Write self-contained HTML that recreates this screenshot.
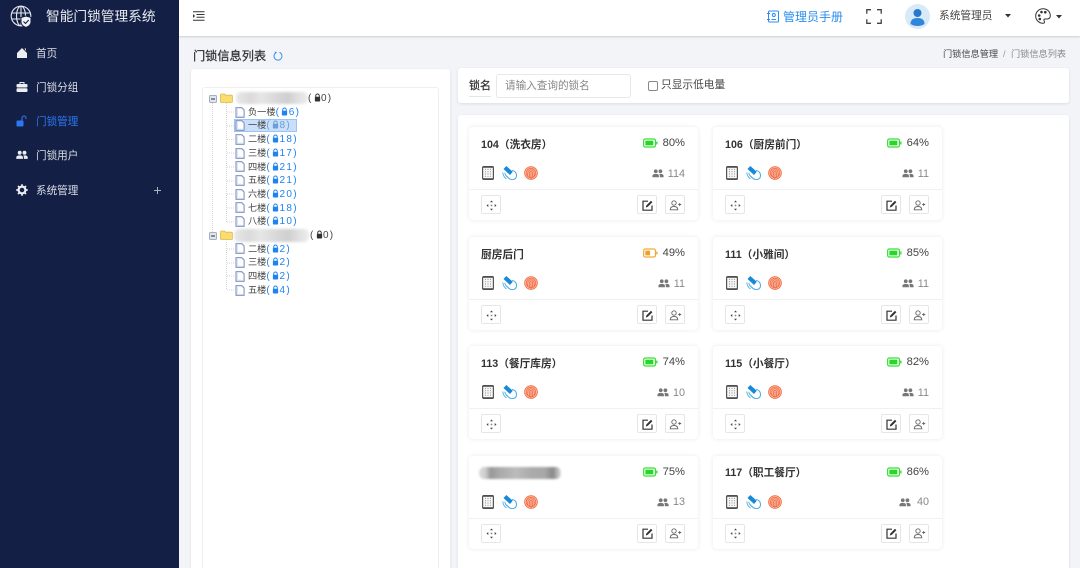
<!DOCTYPE html>
<html lang="zh"><head><meta charset="utf-8"><title>门锁信息列表</title>
<style>
*{box-sizing:border-box}
html,body{margin:0;padding:0;width:1080px;height:568px;overflow:hidden}
body{position:relative;background:#f3f4f8;font-family:"Liberation Sans","Noto Sans CJK SC",sans-serif;color:#333}
.a{position:absolute;white-space:nowrap}
#side{left:0;top:0;width:179px;height:568px;background:#131f45}
#head{left:179px;top:0;width:901px;height:36px;background:#fff;box-shadow:0 1px 2px rgba(0,0,0,.16)}
.m{left:36px;font-size:10.6px;line-height:14px;color:#dcdfe6}
.panel{background:#fff;border-radius:3px;box-shadow:0 1px 3px rgba(0,0,0,.09)}
.card{position:absolute;width:229px;height:93px;background:#fff;border-radius:4px;box-shadow:0 0 4px rgba(30,40,90,.10)}
.card .t{position:absolute;left:12px;top:9.5px;font-size:10.7px;line-height:16px;font-weight:700;color:#333;white-space:nowrap}
.card .p{position:absolute;right:13px;top:8px;font-size:11.2px;line-height:16px;color:#444}
.card .bat{position:absolute;right:40px;top:11px}
.card .i1{position:absolute;left:13px;top:39px}
.card .i2{position:absolute;left:33px;top:39px}
.card .i3{position:absolute;left:55px;top:39px}
.card .u{position:absolute;right:13px;top:39.5px;font-size:10.8px;line-height:15px;color:#888}
.card .ug{position:absolute;top:42px}
.card hr{position:absolute;left:0;right:0;top:62px;margin:0;border:0;border-top:1px solid #f1f1f4}
.b{position:absolute;top:68px;width:20px;height:19px;border:1px solid #e6e6ea;border-radius:2px;background:#fff}
.b svg{position:absolute;left:3px;top:2.5px}
.b1{left:12px}.b2{left:168px}.b3{left:196px}
.r{position:absolute;font-size:9.2px;line-height:13px;color:#444;white-space:nowrap}
.r b{font-weight:400;color:#1e82f0;font-size:10px;letter-spacing:1.3px}
.r svg{vertical-align:-1px;margin:0 .5px 0 1px}
.r.z{font-size:10px;letter-spacing:1.2px}
.blur{position:absolute;background:linear-gradient(90deg,#e8e8e8 0,#dadada 20%,#e6e6e6 35%,#d6d6d6 60%,#cfcfcf 72%,#e2e2e2 88%,#ececec 100%);filter:blur(1.2px);border-radius:5px}
</style></head><body>
<svg width="0" height="0" style="position:absolute">
<symbol id="lk" viewBox="0 0 8 10"><path d="M2 4.5V3a2 2 0 0 1 4 0v1.500" fill="none" stroke="currentColor" stroke-width="1.100"/><rect x="1" y="4.200" width="6" height="5.300" rx=".8" fill="currentColor"/></symbol>
<symbol id="doc" viewBox="0 0 10 11"><path d="M1 .7h5.800l2.300 2.300v7.300H1z" fill="#fff" stroke="#8492bd" stroke-width="1.100"/><path d="M2.300 2v7.300h5.500" fill="none" stroke="#cfe0f8"/></symbol>
<symbol id="fld" viewBox="0 0 13 10"><path d="M.5 2.200Q.5 1 1.600 1h3l1 1.200h5.800q1 0 1 1v5.600q0 .7-1 .7H1.500q-1 0-1-.7z" fill="#fbdc6e" stroke="#dcb84e" stroke-width=".8"/></symbol>
<symbol id="minus" viewBox="0 0 8 8"><rect x=".5" y=".5" width="7" height="7" rx="1" fill="#e1e5ed" stroke="#a5aec2"/><path d="M2 4h4" stroke="#333"/></symbol>
<symbol id="kp" viewBox="0 0 12 14"><rect x=".6" y=".6" width="10.800" height="12.800" rx="1" fill="#f8f8f8" stroke="#555" stroke-width="1.200"/><path d="M1 1.200h10M1 12.800h10" stroke="#444" stroke-width="1.200"/><g fill="#999"><circle cx="3.500" cy="3.400" r=".6"/><circle cx="6" cy="3.400" r=".6"/><circle cx="8.500" cy="3.400" r=".6"/><circle cx="3.500" cy="5.700" r=".6"/><circle cx="6" cy="5.700" r=".6"/><circle cx="8.500" cy="5.700" r=".6"/><circle cx="3.500" cy="8" r=".6"/><circle cx="6" cy="8" r=".6"/><circle cx="8.500" cy="8" r=".6"/><circle cx="3.500" cy="10.300" r=".6"/><circle cx="6" cy="10.300" r=".6"/><circle cx="8.500" cy="10.300" r=".6"/></g></symbol>
<symbol id="card" viewBox="0 0 15 14"><path d="M1.500 3 4.300 0 10.800 5.800 8 9z" fill="#1789d8"/><path d="M10 4.300q4.300 1 4.500 4.900.1 4-3.800 4.400Q8 14 4.500 10" fill="none" stroke="#46a9e6" stroke-width="1"/><path d="M.8 6.500q.3 4 3.700 6.500M2.800 6.800q.3 2.500 2.500 4" fill="none" stroke="#46a9e6" stroke-width=".9"/></symbol>
<symbol id="fp" viewBox="0 0 14 14"><circle cx="7" cy="7" r="6.900" fill="#fbbba6"/><g fill="none" stroke="#f0683f" stroke-width=".75"><circle cx="7" cy="7" r="6.300"/><circle cx="7" cy="7" r="4.700"/><path d="M3.800 10V7a3.200 3.200 0 0 1 6.400 0v3.500M5.500 12V7a1.500 1.500 0 0 1 3 0v5M7 6.500V13"/></g></symbol>
<symbol id="us" viewBox="0 0 13 10"><g fill="#777"><circle cx="4" cy="2.500" r="2.100"/><circle cx="9.200" cy="2.500" r="2.100"/><path d="M.3 9.200V7.500Q.5 5.400 4 5.400t3.500 2.100v1.700zM8.500 9.200V7q0-1-.8-1.500 1-.2 1.800-.1 3 .1 3.200 2.100v1.700z"/></g></symbol>
<symbol id="mv" viewBox="0 0 13 13"><g fill="#444"><path d="M6.500 1.500 8 3.300H5zM6.500 11.500 8 9.700H5zM1.500 6.500 3.300 5v3zM11.500 6.500 9.700 5v3z"/><circle cx="6.500" cy="6.500" r=".9" fill="#888"/></g></symbol>
<symbol id="ed" viewBox="0 0 13 13"><path d="M7 2.200H2v9h9V6.500" fill="none" stroke="#333" stroke-width="1.200"/><path d="M4.800 8.500 5.300 6.500 10 1.800l1.400 1.400-4.700 4.700z" fill="#333"/></symbol>
<symbol id="ua" viewBox="0 0 13 13"><g fill="none" stroke="#666" stroke-width=".9"><circle cx="5" cy="4" r="2.200"/><path d="M1.200 10.800q0-3.300 3.800-3.300t3.800 3.300z"/><path d="M9.200 5.500h3M10.700 4v3"/></g></symbol>
<symbol id="bg" viewBox="0 0 16 10"><rect x=".7" y=".7" width="12.600" height="8.600" rx="1.800" fill="#fff" stroke="#35e035" stroke-width="1.300"/><rect x="2.500" y="2.500" width="8.500" height="5" fill="#27d627"/><rect x="14" y="3.500" width="1.500" height="3" fill="#35e035"/></symbol>
<symbol id="bo" viewBox="0 0 16 10"><rect x=".7" y=".7" width="12.600" height="8.600" rx="1.800" fill="#fff" stroke="#f3a93a" stroke-width="1.300"/><rect x="2.500" y="2.500" width="5" height="5" fill="#f0a020"/><rect x="14" y="3.500" width="1.500" height="3" fill="#f3a93a"/></symbol>
</svg>

<div class="a" id="side"></div>
<svg class="a" style="left:10px;top:5px" width="24" height="24" viewBox="0 0 24 24"><g fill="none" stroke="#e6e8ee" stroke-width="1.100"><circle cx="11" cy="11" r="9.800"/><ellipse cx="11" cy="11" rx="4.500" ry="9.800"/><path d="M11 1v20M1.500 8h19M1.500 14h19"/></g><path d="M16 11l5 1.500V17q0 3.500-5 5.500-5-2-5-5.500v-4.500z" fill="#f1f3f7" stroke="#131f45"/><path d="M13.500 16.500l2 2 3.200-3.500" fill="none" stroke="#131f45" stroke-width="1.100"/></svg>
<div class="a" style="left:46px;top:7px;font-size:13.7px;line-height:20px;color:#e8eaef">智能门锁管理系统</div>

<svg class="a" style="left:16px;top:47px" width="12" height="12" viewBox="0 0 12 12"><path d="M6 1 11 6v5H1V6zM8.500 1.500H10v2.500z" fill="#eceef2"/></svg>
<div class="a m" style="top:46.500px">首页</div>
<svg class="a" style="left:16px;top:81px" width="12" height="12" viewBox="0 0 12 12"><path d="M4 3V1.500h4V3" fill="none" stroke="#eceef2"/><rect x=".5" y="3" width="11" height="3.500" rx="1" fill="#eceef2"/><rect x=".5" y="7.300" width="11" height="3.700" rx="1" fill="#eceef2"/></svg>
<div class="a m" style="top:80.500px">门锁分组</div>
<svg class="a" style="left:16px;top:115px" width="11" height="12" viewBox="0 0 11 12"><rect x=".5" y="5.500" width="7" height="6" rx="1" fill="#2d78f0"/><path d="M6 5.500V3a2 2 0 0 1 4 0v1" fill="none" stroke="#2d78f0" stroke-width="1.100"/></svg>
<div class="a m" style="top:114.500px;color:#2d78f0">门锁管理</div>
<svg class="a" style="left:16px;top:150px" width="12" height="10" viewBox="0 0 13 10"><g fill="#eceef2"><circle cx="4" cy="2.500" r="2.100"/><circle cx="9.200" cy="2.500" r="2.100"/><path d="M.3 9.200V7.500Q.5 5.400 4 5.400t3.500 2.100v1.700zM8.500 9.200V7q0-1-.8-1.500 1-.2 1.800-.1 3 .1 3.200 2.100v1.700z"/></g></svg>
<div class="a m" style="top:148.500px">门锁用户</div>
<svg class="a" style="left:16px;top:184px" width="12" height="12" viewBox="0 0 12 12"><circle cx="6" cy="6" r="3.400" fill="none" stroke="#eceef2" stroke-width="2.200"/><path d="M6 .3v2M6 9.700v2M.3 6h2M9.700 6h2M2 2l1.400 1.400M8.600 8.600 10 10M2 10l1.400-1.400M8.600 3.400 10 2" stroke="#eceef2" stroke-width="1.700"/></svg>
<div class="a m" style="top:183.500px">系统管理</div>
<svg class="a" style="left:154px;top:187px" width="7" height="7"><path d="M3.500 0v7M0 3.500h7" stroke="#aeb3c0"/></svg>

<div class="a" id="head"></div>
<svg class="a" style="left:193px;top:11px" width="12" height="10" viewBox="0 0 12 10"><path d="M0 .7h11.500M3.500 3.500h8M3.500 6.300h8M0 9.200h11.500" stroke="#333" stroke-width="1"/><path d="M0 3l2 2-2 2z" fill="#333"/></svg>
<svg class="a" style="left:767px;top:10px" width="12" height="13" viewBox="0 0 12 13"><g fill="none" stroke="#2b8df0"><rect x="1.500" y="1" width="10" height="11" rx="1"/><path d="M0 3.500h3M0 9.500h3M4.500 9.500h4.500"/><circle cx="6.800" cy="5" r="1.500"/></g></svg>
<div class="a" style="left:783px;top:9px;font-size:12px;line-height:17px;color:#2b8df0">管理员手册</div>
<svg class="a" style="left:866px;top:9px" width="16" height="15" viewBox="0 0 16 15"><path d="M5 .7H.8v4M11 .7h4.200v4M5 14.300H.8v-4M11 14.300h4.200v-4" fill="none" stroke="#444" stroke-width="1.300"/></svg>
<svg class="a" style="left:905px;top:4px" width="25" height="25" viewBox="0 0 25 25"><circle cx="12.500" cy="12.500" r="12.500" fill="#d8e9f8"/><circle cx="12.500" cy="9" r="4" fill="#2a78cc"/><path d="M5.500 20q0-6 7-6t7 6q-3 2-7 2t-7-2z" fill="#2f86dc"/></svg>
<div class="a" style="left:939px;top:9px;font-size:10.7px;line-height:15px;color:#444">系统管理员</div>
<svg class="a" style="left:1005px;top:14px" width="6" height="4"><path d="M0 0h6L3 3.500z" fill="#333"/></svg>
<svg class="a" style="left:1035px;top:8px" width="16" height="16" viewBox="0 0 16 16"><path d="M8 .7a7.300 7.300 0 1 0 0 14.600q1.500 0 1.500-1.300 0-.8-.5-1.300-.6-1.200.8-1.700h2.200q3.300 0 3.300-3.200C15.300 3.500 12 .7 8 .7z" fill="#fff" stroke="#333"/><g fill="#333"><circle cx="4.200" cy="7.500" r="1.300"/><circle cx="6.500" cy="4" r="1.300"/><circle cx="10.300" cy="4.200" r="1.300"/><circle cx="4.800" cy="11" r="1.300"/></g></svg>
<svg class="a" style="left:1056px;top:15px" width="6" height="4"><path d="M0 0h6L3 3.500z" fill="#333"/></svg>

<div class="a" style="left:193px;top:48px;font-size:12.2px;line-height:17px;color:#333;-webkit-text-stroke:.25px #333">门锁信息列表</div>
<svg class="a" style="left:273px;top:51px" width="10" height="10" viewBox="0 0 10 10"><path d="M6.500 1.400A4 4 0 1 1 2.500 2" fill="none" stroke="#3f93ef" stroke-width="1"/><path d="M1.500.5l2.500.5L2.700 3z" fill="#3f93ef"/></svg>
<div class="a" style="left:943px;top:47.500px;font-size:9.2px;line-height:13px;color:#444">门锁信息管理</div>
<div class="a" style="left:1003px;top:47.500px;font-size:9.2px;line-height:13px;color:#999">/</div>
<div class="a" style="left:1011px;top:47.500px;font-size:9.2px;line-height:13px;color:#888">门锁信息列表</div>

<div class="a panel" style="left:191px;top:69px;width:259px;height:510px"></div>
<div class="a" style="left:202px;top:87px;width:237px;height:490px;border:1px solid #efeff2;border-radius:3px"></div>

<svg class="a" style="left:209px;top:94px" width="30" height="205"><g stroke="#d4d4d4" stroke-dasharray="1 1" fill="none"><path d="M3.500 9V138"/><path d="M17.500 9V128M17.500 148V196M18 18h8M18 32h8M18 45.500h8M18 59h8M18 73h8M18 87h8M18 100h8M18 114h8M18 128h8M18 155h8M18 169h8M18 182h8M18 196h8"/></g></svg>
<svg class="a" style="left:209px;top:95px" width="8" height="8"><use href="#minus"/></svg>
<svg class="a" style="left:220px;top:93px" width="13" height="10"><use href="#fld"/></svg>
<div class="blur" style="left:236px;top:92px;width:72px;height:12px"></div>
<div class="r z" style="left:308px;top:92px">(<svg width="7" height="9" style="color:#333"><use href="#lk"/></svg>0)</div>
<svg class="a" style="left:209px;top:232px" width="8" height="8"><use href="#minus"/></svg>
<svg class="a" style="left:220px;top:230px" width="13" height="10"><use href="#fld"/></svg>
<div class="blur" style="left:234px;top:229px;width:75px;height:13px"></div>
<div class="r z" style="left:310px;top:229px">(<svg width="7" height="9" style="color:#333"><use href="#lk"/></svg>0)</div>

<div class="a" style="left:234px;top:119px;width:63px;height:12.500px;background:#c9dffa;border:1px solid #9cc3f2"></div>

<svg class="a" style="left:235px;top:107px" width="10" height="11"><use href="#doc"/></svg>
<div class="r" style="left:248px;top:106px">负一楼<b>(<svg width="7" height="9"><use href="#lk"/></svg>6)</b></div>
<svg class="a" style="left:235px;top:120px" width="10" height="11"><use href="#doc"/></svg>
<div class="r" style="left:248px;top:119px">一楼<b style="color:#6a9fd8">(<svg width="7" height="9"><use href="#lk"/></svg>8)</b></div>
<svg class="a" style="left:235px;top:134px" width="10" height="11"><use href="#doc"/></svg>
<div class="r" style="left:248px;top:133px">二楼<b>(<svg width="7" height="9"><use href="#lk"/></svg>18)</b></div>
<svg class="a" style="left:235px;top:148px" width="10" height="11"><use href="#doc"/></svg>
<div class="r" style="left:248px;top:147px">三楼<b>(<svg width="7" height="9"><use href="#lk"/></svg>17)</b></div>
<svg class="a" style="left:235px;top:161px" width="10" height="11"><use href="#doc"/></svg>
<div class="r" style="left:248px;top:160.500px">四楼<b>(<svg width="7" height="9"><use href="#lk"/></svg>21)</b></div>
<svg class="a" style="left:235px;top:175px" width="10" height="11"><use href="#doc"/></svg>
<div class="r" style="left:248px;top:174px">五楼<b>(<svg width="7" height="9"><use href="#lk"/></svg>21)</b></div>
<svg class="a" style="left:235px;top:189px" width="10" height="11"><use href="#doc"/></svg>
<div class="r" style="left:248px;top:188px">六楼<b>(<svg width="7" height="9"><use href="#lk"/></svg>20)</b></div>
<svg class="a" style="left:235px;top:202px" width="10" height="11"><use href="#doc"/></svg>
<div class="r" style="left:248px;top:201.500px">七楼<b>(<svg width="7" height="9"><use href="#lk"/></svg>18)</b></div>
<svg class="a" style="left:235px;top:216px" width="10" height="11"><use href="#doc"/></svg>
<div class="r" style="left:248px;top:215px">八楼<b>(<svg width="7" height="9"><use href="#lk"/></svg>10)</b></div>
<svg class="a" style="left:235px;top:243px" width="10" height="11"><use href="#doc"/></svg>
<div class="r" style="left:248px;top:242.500px">二楼<b>(<svg width="7" height="9"><use href="#lk"/></svg>2)</b></div>
<svg class="a" style="left:235px;top:257px" width="10" height="11"><use href="#doc"/></svg>
<div class="r" style="left:248px;top:256px">三楼<b>(<svg width="7" height="9"><use href="#lk"/></svg>2)</b></div>
<svg class="a" style="left:235px;top:271px" width="10" height="11"><use href="#doc"/></svg>
<div class="r" style="left:248px;top:270px">四楼<b>(<svg width="7" height="9"><use href="#lk"/></svg>2)</b></div>
<svg class="a" style="left:235px;top:285px" width="10" height="11"><use href="#doc"/></svg>
<div class="r" style="left:248px;top:284px">五楼<b>(<svg width="7" height="9"><use href="#lk"/></svg>4)</b></div>

<div class="a panel" style="left:458px;top:68px;width:611px;height:35px"></div>
<div class="a" style="left:469px;top:78px;font-size:11px;line-height:16px;color:#333;-webkit-text-stroke:.25px #333;border-bottom:1px solid #dfe5f2;padding-bottom:2px">锁名</div>
<div class="a" style="left:496px;top:74px;width:135px;height:24px;border:1px solid #e8e8ec;border-radius:3px;background:#fff"></div>
<div class="a" style="left:505px;top:79px;font-size:10.6px;line-height:15px;color:#888">请输入查询的锁名</div>
<div class="a" style="left:648px;top:81px;width:10px;height:10px;border:1px solid #888;border-radius:2px;background:#fff"></div>
<div class="a" style="left:661px;top:78px;font-size:10.7px;line-height:15px;color:#444">只显示低电量</div>

<div class="a panel" style="left:458px;top:115px;width:611px;height:470px"></div>

<div class="card" style="left:469px;top:127px"><div class="t">104（洗衣房）</div><svg class="bat" width="15" height="10"><use href="#bg"/></svg><div class="p">80%</div><svg class="i1" width="12" height="14"><use href="#kp"/></svg><svg class="i2" width="15" height="14"><use href="#card"/></svg><svg class="i3" width="14" height="14"><use href="#fp"/></svg><svg class="ug" style="left:183px" width="12" height="9"><use href="#us"/></svg><div class="u">114</div><hr><div class="b b1"><svg width="13" height="13"><use href="#mv"/></svg></div><div class="b b2"><svg width="13" height="13"><use href="#ed"/></svg></div><div class="b b3"><svg width="13" height="13"><use href="#ua"/></svg></div></div>

<div class="card" style="left:713px;top:127px"><div class="t">106（厨房前门）</div><svg class="bat" width="15" height="10"><use href="#bg"/></svg><div class="p">64%</div><svg class="i1" width="12" height="14"><use href="#kp"/></svg><svg class="i2" width="15" height="14"><use href="#card"/></svg><svg class="i3" width="14" height="14"><use href="#fp"/></svg><svg class="ug" style="left:189px" width="12" height="9"><use href="#us"/></svg><div class="u">11</div><hr><div class="b b1"><svg width="13" height="13"><use href="#mv"/></svg></div><div class="b b2"><svg width="13" height="13"><use href="#ed"/></svg></div><div class="b b3"><svg width="13" height="13"><use href="#ua"/></svg></div></div>

<div class="card" style="left:469px;top:237px"><div class="t">厨房后门</div><svg class="bat" width="15" height="10"><use href="#bo"/></svg><div class="p">49%</div><svg class="i1" width="12" height="14"><use href="#kp"/></svg><svg class="i2" width="15" height="14"><use href="#card"/></svg><svg class="i3" width="14" height="14"><use href="#fp"/></svg><svg class="ug" style="left:189px" width="12" height="9"><use href="#us"/></svg><div class="u">11</div><hr><div class="b b1"><svg width="13" height="13"><use href="#mv"/></svg></div><div class="b b2"><svg width="13" height="13"><use href="#ed"/></svg></div><div class="b b3"><svg width="13" height="13"><use href="#ua"/></svg></div></div>

<div class="card" style="left:713px;top:237px"><div class="t">111（小雅间）</div><svg class="bat" width="15" height="10"><use href="#bg"/></svg><div class="p">85%</div><svg class="i1" width="12" height="14"><use href="#kp"/></svg><svg class="i2" width="15" height="14"><use href="#card"/></svg><svg class="i3" width="14" height="14"><use href="#fp"/></svg><svg class="ug" style="left:189px" width="12" height="9"><use href="#us"/></svg><div class="u">11</div><hr><div class="b b1"><svg width="13" height="13"><use href="#mv"/></svg></div><div class="b b2"><svg width="13" height="13"><use href="#ed"/></svg></div><div class="b b3"><svg width="13" height="13"><use href="#ua"/></svg></div></div>

<div class="card" style="left:469px;top:346px"><div class="t">113（餐厅库房）</div><svg class="bat" width="15" height="10"><use href="#bg"/></svg><div class="p">74%</div><svg class="i1" width="12" height="14"><use href="#kp"/></svg><svg class="i2" width="15" height="14"><use href="#card"/></svg><svg class="i3" width="14" height="14"><use href="#fp"/></svg><svg class="ug" style="left:188px" width="12" height="9"><use href="#us"/></svg><div class="u">10</div><hr><div class="b b1"><svg width="13" height="13"><use href="#mv"/></svg></div><div class="b b2"><svg width="13" height="13"><use href="#ed"/></svg></div><div class="b b3"><svg width="13" height="13"><use href="#ua"/></svg></div></div>

<div class="card" style="left:713px;top:346px"><div class="t">115（小餐厅）</div><svg class="bat" width="15" height="10"><use href="#bg"/></svg><div class="p">82%</div><svg class="i1" width="12" height="14"><use href="#kp"/></svg><svg class="i2" width="15" height="14"><use href="#card"/></svg><svg class="i3" width="14" height="14"><use href="#fp"/></svg><svg class="ug" style="left:189px" width="12" height="9"><use href="#us"/></svg><div class="u">11</div><hr><div class="b b1"><svg width="13" height="13"><use href="#mv"/></svg></div><div class="b b2"><svg width="13" height="13"><use href="#ed"/></svg></div><div class="b b3"><svg width="13" height="13"><use href="#ua"/></svg></div></div>

<div class="card" style="left:469px;top:455.500px"><div class="blur" style="left:10px;top:11px;width:82px;height:12px;background:linear-gradient(90deg,#ddd 0,#ccc 8%,#999 14%,#aaa 25%,#bbb 45%,#aaa 65%,#a8a8a8 80%,#888 90%,#ddd 100%);filter:blur(1px)"></div><svg class="bat" width="15" height="10"><use href="#bg"/></svg><div class="p">75%</div><svg class="i1" width="12" height="14"><use href="#kp"/></svg><svg class="i2" width="15" height="14"><use href="#card"/></svg><svg class="i3" width="14" height="14"><use href="#fp"/></svg><svg class="ug" style="left:188px" width="12" height="9"><use href="#us"/></svg><div class="u">13</div><hr><div class="b b1"><svg width="13" height="13"><use href="#mv"/></svg></div><div class="b b2"><svg width="13" height="13"><use href="#ed"/></svg></div><div class="b b3"><svg width="13" height="13"><use href="#ua"/></svg></div></div>

<div class="card" style="left:713px;top:455.500px"><div class="t">117（职工餐厅）</div><svg class="bat" width="15" height="10"><use href="#bg"/></svg><div class="p">86%</div><svg class="i1" width="12" height="14"><use href="#kp"/></svg><svg class="i2" width="15" height="14"><use href="#card"/></svg><svg class="i3" width="14" height="14"><use href="#fp"/></svg><svg class="ug" style="left:186px" width="12" height="9"><use href="#us"/></svg><div class="u">40</div><hr><div class="b b1"><svg width="13" height="13"><use href="#mv"/></svg></div><div class="b b2"><svg width="13" height="13"><use href="#ed"/></svg></div><div class="b b3"><svg width="13" height="13"><use href="#ua"/></svg></div></div>
</body></html>
